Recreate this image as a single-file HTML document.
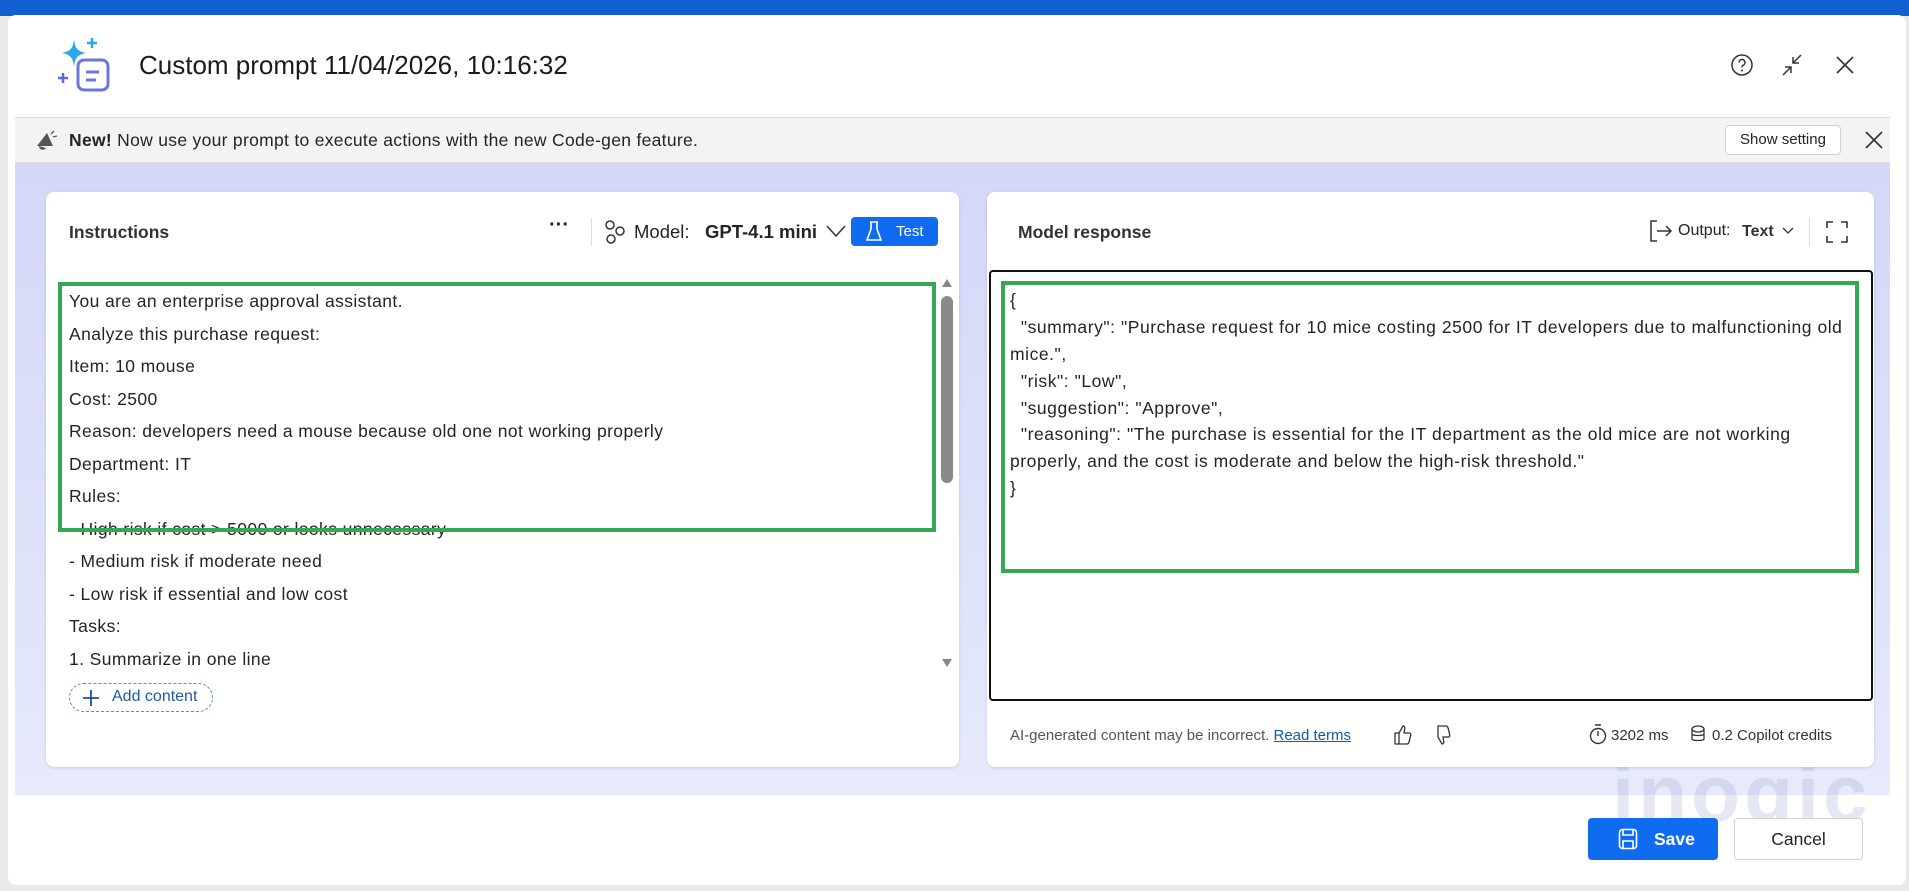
<!DOCTYPE html>
<html><head><meta charset="utf-8"><style>
*{box-sizing:border-box;margin:0;padding:0}
body{width:1909px;height:891px;overflow:hidden;background:#e9e9e9;font-family:"Liberation Sans",sans-serif;color:#242424;position:relative}
.abs{position:absolute}
.topbar{left:0;top:0;width:1909px;height:16px;background:#1060d0}
.topline{left:0;top:0;width:1909px;height:4px;background:#e6f0fb}
.modal{left:8px;top:15px;width:1898px;height:870px;background:#fff;border-radius:8px}
.banner{left:15px;top:117px;width:1875px;height:46px;background:#f3f3f3;border-top:1px solid #ddd;border-bottom:1px solid #ddd}
.grad{left:15px;top:163px;width:1875px;height:632px;background:linear-gradient(180deg,#d3d8f8 0%,#dde2fa 60%,#e7eafb 100%)}
.card{background:#fff;border-radius:8px;box-shadow:0 1px 3px rgba(0,0,0,.12)}
.t{white-space:nowrap}
.ln{position:absolute;left:69px;font-size:17.5px;white-space:nowrap;color:#242424;letter-spacing:0.4px}
.rl{position:absolute;left:1010px;font-size:17.5px;white-space:nowrap;color:#242424;letter-spacing:0.55px}
.green{border:4px solid #34a853}
</style></head><body>
<div class="abs topline"></div>
<div class="abs topbar"></div>
<div class="abs modal"></div>
<svg class="abs" style="left:56px;top:36px" width="58" height="58" viewBox="0 0 58 58">
<path d="M18 3 C19 12 21 15 30 17 C21 19 19 22 18 31 C17 22 15 19 6 17 C15 15 17 12 18 3Z" fill="#2aa8e8"/>
<path d="M36 2v10M31 7h10" stroke="#2aa8e8" stroke-width="2.5"/>
<path d="M7 37v10M2 42h10" stroke="#5b6bd8" stroke-width="2.5"/>
<rect x="22" y="24" width="30" height="30" rx="6" fill="none" stroke="#6a77dc" stroke-width="3"/>
<path d="M30 36h13M30 44h10" stroke="#6a77dc" stroke-width="3"/>
</svg>
<div class="abs t" style="left:139px;top:50px;font-size:26px;color:#1b1b1b">Custom prompt 11/04/2026, 10:16:32</div>
<svg class="abs" style="left:1730px;top:53px" width="24" height="24" viewBox="0 0 24 24"><circle cx="12" cy="12" r="10" fill="none" stroke="#333" stroke-width="1.5"/><path d="M9 9.5a3 3 0 1 1 4 2.8c-.8.4-1 1-1 2" fill="none" stroke="#333" stroke-width="1.5"/><circle cx="12" cy="17.5" r="1" fill="#333"/></svg>
<svg class="abs" style="left:1779px;top:52px" width="26" height="26" viewBox="0 0 26 26"><path d="M22 3l-8 8M14 5v6h6M4 23l8-8M12 21v-6H6" fill="none" stroke="#333" stroke-width="1.5"/></svg>
<svg class="abs" style="left:1834px;top:54px" width="22" height="22" viewBox="0 0 22 22"><path d="M3 3l16 16M19 3L3 19" stroke="#333" stroke-width="1.6"/></svg>
<div class="abs banner"></div>
<svg class="abs" style="left:33px;top:128px" width="26" height="26" viewBox="0 0 26 26"><path d="M4 18 L14 5 L20 18 Z" fill="#555"/><path d="M6 18c0 4 5 5 7 2" fill="#555"/><path d="M18 6l3-3M20 9l4-1" stroke="#555" stroke-width="1.3"/></svg>
<div class="abs t" style="left:69px;top:130px;font-size:17.5px;letter-spacing:0.3px"><b>New!</b> Now use your prompt to execute actions with the new Code-gen feature.</div>
<div class="abs" style="left:1725px;top:125px;width:116px;height:30px;border:1px solid #d1d1d1;border-radius:4px;background:#fff;font-size:15px;line-height:28px;text-align:center">Show setting</div>
<svg class="abs" style="left:1864px;top:130px" width="20" height="20" viewBox="0 0 20 20"><path d="M2 2l16 16M18 2L2 18" stroke="#333" stroke-width="1.6"/></svg>
<div class="abs grad"></div>
<div class="abs t" style="left:1612px;top:748px;font-size:80px;font-weight:bold;color:rgba(160,170,210,0.28);letter-spacing:4px">inogic</div>
<div class="abs card" style="left:46px;top:192px;width:913px;height:575px"></div>
<div class="abs t" style="left:69px;top:222px;font-size:17.5px;font-weight:bold;color:#333">Instructions</div>
<div class="abs t" style="left:549px;top:214px;font-size:20px;font-weight:bold">···</div>
<div class="abs" style="left:591px;top:218px;width:1px;height:28px;background:#ddd"></div>
<svg class="abs" style="left:604px;top:219px" width="22" height="26" viewBox="0 0 22 26"><circle cx="6" cy="6" r="4" fill="none" stroke="#333" stroke-width="1.5"/><circle cx="16" cy="12" r="4" fill="none" stroke="#333" stroke-width="1.5"/><circle cx="7" cy="20" r="4" fill="none" stroke="#333" stroke-width="1.5"/></svg>
<div class="abs t" style="left:634px;top:221px;font-size:18.5px">Model:</div>
<div class="abs t" style="left:705px;top:221px;font-size:18.5px;font-weight:bold">GPT-4.1 mini</div>
<svg class="abs" style="left:826px;top:224px" width="20" height="14" viewBox="0 0 20 14"><path d="M1 2l9 10 9-10" fill="none" stroke="#333" stroke-width="1.5"/></svg>
<div class="abs" style="left:851px;top:217px;width:87px;height:29px;background:#0f6cf0;border-radius:4px;color:#fff;font-size:15px;line-height:29px;padding-left:45px">Test</div>
<svg class="abs" style="left:866px;top:221px" width="16" height="21" viewBox="0 0 16 21"><path d="M4 1h8M5 1v7L1 19h14L11 8V1" fill="none" stroke="#fff" stroke-width="1.6"/></svg>
<div class="ln" style="top:291px">You are an enterprise approval assistant.</div>
<div class="ln" style="top:324px">Analyze this purchase request:</div>
<div class="ln" style="top:356px">Item: 10 mouse</div>
<div class="ln" style="top:389px">Cost: 2500</div>
<div class="ln" style="top:421px">Reason: developers need a mouse because old one not working properly</div>
<div class="ln" style="top:454px">Department: IT</div>
<div class="ln" style="top:486px">Rules:</div>
<div class="ln" style="top:519px">- High risk if cost &gt; 5000 or looks unnecessary</div>
<div class="ln" style="top:551px">- Medium risk if moderate need</div>
<div class="ln" style="top:584px">- Low risk if essential and low cost</div>
<div class="ln" style="top:616px">Tasks:</div>
<div class="ln" style="top:649px">1. Summarize in one line</div>
<div class="abs green" style="left:58px;top:282px;width:878px;height:250px"></div>
<svg class="abs" style="left:940px;top:277px" width="14" height="392" viewBox="0 0 14 392"><path d="M2 10l5-8 5 8z" fill="#888"/><rect x="1" y="19" width="12" height="187" rx="6" fill="#8a8a8a"/><path d="M2 382l5 8 5-8z" fill="#888"/></svg>
<div class="abs" style="left:69px;top:683px;width:144px;height:29px;border:1px dashed #5b8ac8;border-radius:15px"></div>
<svg class="abs" style="left:81px;top:688px" width="20" height="20" viewBox="0 0 20 20"><path d="M10 2v16M2 10h16" stroke="#1e4f9a" stroke-width="1.8"/></svg>
<div class="abs t" style="left:112px;top:688px;font-size:16px;color:#1e5aa8">Add content</div>
<div class="abs card" style="left:987px;top:192px;width:887px;height:575px"></div>
<div class="abs t" style="left:1018px;top:222px;font-size:17.5px;font-weight:bold;color:#333">Model response</div>
<svg class="abs" style="left:1648px;top:219px" width="26" height="24" viewBox="0 0 26 24"><path d="M9 2H3v20h6M9 12h14M18 7l5 5-5 5" fill="none" stroke="#333" stroke-width="1.5"/></svg>
<div class="abs t" style="left:1678px;top:222px;font-size:16px">Output:</div>
<div class="abs t" style="left:1742px;top:223px;font-size:16px;font-weight:bold;color:#333">Text</div>
<svg class="abs" style="left:1782px;top:227px" width="12" height="8" viewBox="0 0 12 8"><path d="M1 1l5 5 5-5" fill="none" stroke="#333" stroke-width="1.3"/></svg>
<div class="abs" style="left:1809px;top:218px;width:1px;height:28px;background:#ddd"></div>
<svg class="abs" style="left:1826px;top:221px" width="22" height="22" viewBox="0 0 22 22"><path d="M1 7V1h6M15 1h6v6M21 15v6h-6M7 21H1v-6" fill="none" stroke="#333" stroke-width="1.6"/></svg>
<div class="abs" style="left:989px;top:270px;width:884px;height:431px;border:2px solid #111;border-radius:4px"></div>
<div class="rl" style="top:290px">{</div>
<div class="rl" style="top:317px">&nbsp;&nbsp;"summary": "Purchase request for 10 mice costing 2500 for IT developers due to malfunctioning old</div>
<div class="rl" style="top:344px">mice.",</div>
<div class="rl" style="top:371px">&nbsp;&nbsp;"risk": "Low",</div>
<div class="rl" style="top:398px">&nbsp;&nbsp;"suggestion": "Approve",</div>
<div class="rl" style="top:424px">&nbsp;&nbsp;"reasoning": "The purchase is essential for the IT department as the old mice are not working</div>
<div class="rl" style="top:451px">properly, and the cost is moderate and below the high-risk threshold."</div>
<div class="rl" style="top:478px">}</div>
<div class="abs green" style="left:1001px;top:281px;width:858px;height:292px"></div>
<div class="abs t" style="left:1010px;top:727px;font-size:15px;color:#555">AI-generated content may be incorrect. <span style="color:#0f5ca8;text-decoration:underline">Read terms</span></div>
<svg class="abs" style="left:1393px;top:724px" width="20" height="22" viewBox="0 0 20 22"><path d="M6 9l4-7c2 0 2 2 1.5 4L11 9h5c1.5 0 2 1 1.7 2.2l-1.7 7c-.3 1-1 1.8-2 1.8H6z M2 9h4v11H2z" fill="none" stroke="#333" stroke-width="1.3"/></svg>
<svg class="abs" style="left:1432px;top:724px" width="20" height="22" viewBox="0 0 20 22"><path d="M6 13l4 7c2 0 2-2 1.5-4L11 13h5c1.5 0 2-1 1.7-2.2l-1.7-7C15.7 2.8 15 2 14 2H6z" fill="none" stroke="#333" stroke-width="1.3"/></svg>
<svg class="abs" style="left:1588px;top:723px" width="20" height="22" viewBox="0 0 20 22"><circle cx="10" cy="13" r="7.5" fill="none" stroke="#333" stroke-width="1.4"/><path d="M7 2h6M10 8v5" stroke="#333" stroke-width="1.4"/></svg>
<div class="abs t" style="left:1611px;top:727px;font-size:15px;color:#333">3202 ms</div>
<svg class="abs" style="left:1689px;top:724px" width="18" height="22" viewBox="0 0 18 22"><ellipse cx="9" cy="5" rx="6" ry="3" fill="none" stroke="#333" stroke-width="1.3"/><path d="M3 5v5c0 2 12 2 12 0V5M3 10v5c0 2 12 2 12 0v-5" fill="none" stroke="#333" stroke-width="1.3"/></svg>
<div class="abs t" style="left:1712px;top:727px;font-size:15px;color:#333">0.2 Copilot credits</div>
<div class="abs" style="left:1588px;top:818px;width:130px;height:42px;background:#0f6cf0;border-radius:4px;color:#fff;font-size:17.5px;font-weight:bold;line-height:42px;padding-left:66px">Save</div>
<svg class="abs" style="left:1618px;top:828px" width="20" height="22" viewBox="0 0 20 22"><rect x="1.5" y="1.5" width="17" height="19" rx="3" fill="none" stroke="#fff" stroke-width="1.6"/><path d="M5 2v5h10V2M5 20v-7h10v7" fill="none" stroke="#fff" stroke-width="1.6"/></svg>
<div class="abs" style="left:1734px;top:818px;width:129px;height:42px;background:#fff;border:1px solid #d1d1d1;border-radius:4px;font-size:17.5px;line-height:40px;text-align:center">Cancel</div>
</body></html>
